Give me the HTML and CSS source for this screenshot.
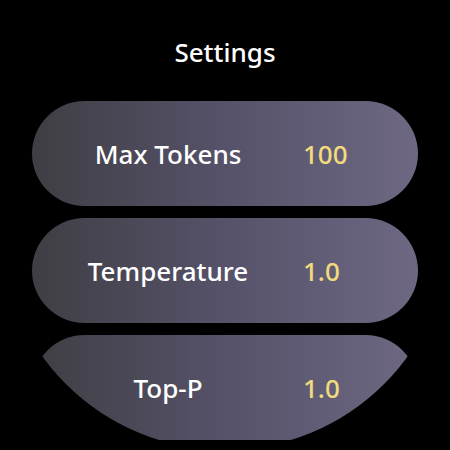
FILE: index.html
```html
<!DOCTYPE html>
<html lang="en">
<head>
<meta charset="utf-8">
<title>Settings</title>
<link rel="stylesheet" href="styles.css">
</head>
<body>
<div class="screen">
  <h1 class="title">Settings</h1>
  <div class="list">
    <div class="pill">
      <span class="label">Max Tokens</span>
      <span class="value">100</span>
    </div>
    <div class="pill">
      <span class="label">Temperature</span>
      <span class="value">1.0</span>
    </div>
    <div class="pill">
      <span class="label">Top-P</span>
      <span class="value">1.0</span>
    </div>
  </div>
</div>
</body>
</html>
```

FILE: styles.css
```css
html, body {
  margin: 0;
  padding: 0;
  background: #000;
}

.screen {
  width: 450px;
  height: 450px;
  background: #000;
  border-radius: 50%;
  overflow: hidden;
  font-family: "Noto Sans", "DejaVu Sans", sans-serif;
  font-weight: 500;
  color: #fff;
  box-sizing: border-box;
  padding-top: 39px;
}

.title {
  margin: 0 0 36px 0;
  font-size: 26px;
  line-height: 26px;
  font-weight: 500;
  text-align: center;
}

.list {
  display: flex;
  flex-direction: column;
  gap: 12px;
  padding: 0 32px;
}

.pill {
  height: 105px;
  border-radius: 53px;
  background: linear-gradient(90deg, #3f3e43 0%, #56526a 50%, #6e6882 100%);
  display: grid;
  grid-template-columns: 176px auto;
  column-gap: 47px;
  align-items: center;
  padding-left: 48px;
  font-size: 26px;
  line-height: 26px;
}

.label {
  text-align: center;
  white-space: nowrap;
  color: #fff;
}

.value {
  text-align: left;
  color: #f2db7c;
}
```
